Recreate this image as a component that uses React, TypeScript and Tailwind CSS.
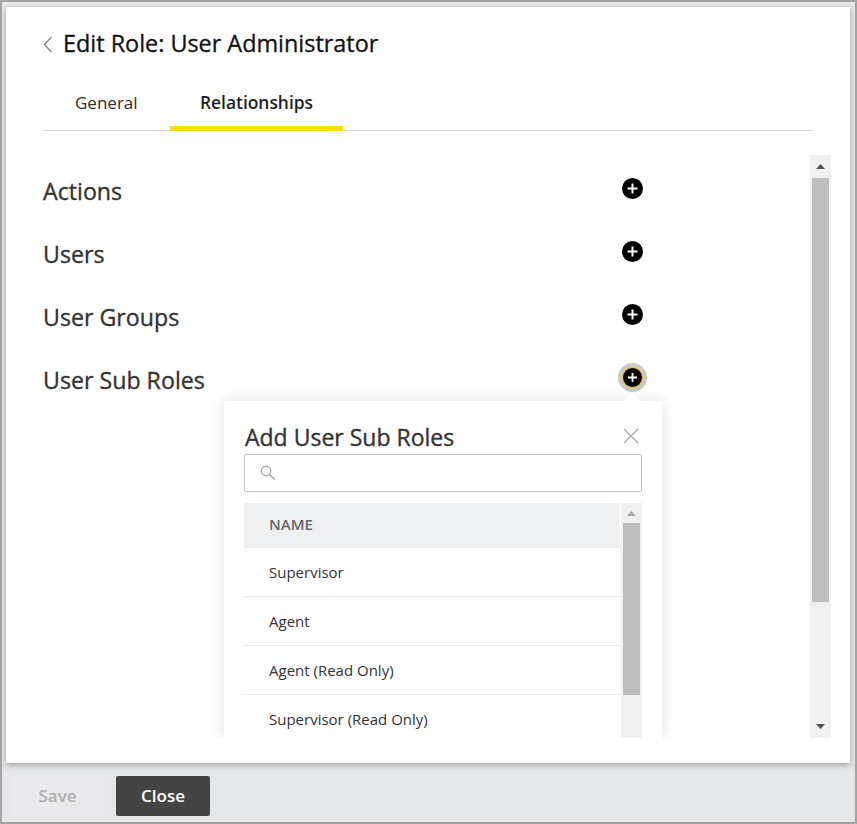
const sections = ['Actions', 'Users', 'User Groups', 'User Sub Roles'];
const subRoles = ['Supervisor', 'Agent', 'Agent (Read Only)', 'Supervisor (Read Only)'];

const PlusIcon = ({ size = 21 }: { size?: number }) => (
  <svg width={size} height={size} viewBox="0 0 21 21" className="block">
    <circle cx="10.5" cy="10.5" r="10.5" fill="#000" />
    <path d="M10.5 5.5v10M5.5 10.5h10" stroke="#fff" strokeWidth="2" />
  </svg>
);

const Arrow = ({ down, color }: { down?: boolean; color: string }) => (
  <svg width="9" height="5" viewBox="0 0 9 5" className="block">
    <path d={down ? 'M0 0h9L4.5 5z' : 'M4.5 0L9 5H0z'} fill={color} />
  </svg>
);

const App = () => {
  return (
    <div className="h-[824px] w-[857px] overflow-hidden border-2 border-[#a3a3a3] bg-[#e6e7e9] font-['Open_Sans',sans-serif]">
      <div className="ml-[4px] mt-[5px] flex h-[756px] w-[844px] flex-col bg-white shadow-[0_2px_6px_rgba(0,0,0,0.3)]">
        <header className="flex h-[74px] items-center pl-[37px]">
          <svg width="10" height="17" viewBox="0 0 10 17" className="mr-[10px] flex-none">
            <path d="M8.5 1L1.5 8.5L8.5 16" fill="none" stroke="#8a8a8a" strokeWidth="1.4" />
          </svg>
          <h1 className="text-[23.4px] leading-none text-[#111] [-webkit-text-stroke:0.3px]">Edit Role: User Administrator</h1>
        </header>

        <nav className="mx-[37px] flex h-[50px] border-b border-[#d8d8d8] pl-[32px]">
          <div className="flex h-[43px] w-[95px] items-center text-[17px] text-[#2d2d2d]">General</div>
          <div className="flex h-[50px] w-[173px] flex-none items-start justify-center border-b-[5px] border-[#ffdf00] pt-[9px] text-[17.4px] leading-[25px] font-semibold text-[#1f1f1f]">
            Relationships
          </div>
        </nav>

        <div className="relative mt-[24px] flex h-[583px] pl-[37px] pr-[19px]">
          <div className="w-[600px] flex-none pt-[5px]">
            {sections.map((name) => (
              <div key={name} className="flex h-[63px] items-center justify-between">
                <span className="text-[23.2px] text-[#333] [-webkit-text-stroke:0.35px]">{name}</span>
                {name === 'User Sub Roles' ? (
                  <span className="mt-[-6px] flex h-[29px] w-[29px] translate-x-[4px] items-center justify-center rounded-full bg-[#c9c9c9]">
                    <span className="rounded-full ring-1 ring-[#f2c21a]">
                      <PlusIcon size={19} />
                    </span>
                  </span>
                ) : (
                  <span className="mt-[-6px]">
                    <PlusIcon />
                  </span>
                )}
              </div>
            ))}
          </div>

          <div className="ml-auto flex w-[21px] flex-none flex-col bg-[#f0f0f0] px-[2px]">
            <div className="flex h-[23px] items-center justify-center">
              <Arrow color="#505050" />
            </div>
            <div className="h-[424px] bg-[#bebebe]" />
            <div className="mt-auto flex h-[23px] items-center justify-center">
              <Arrow down color="#505050" />
            </div>
          </div>

          {/* add sub roles popover */}
          <div className="absolute left-[218px] top-[246px] h-[337px] w-[438px] bg-white px-[20px] shadow-[0_0_14px_rgba(0,0,0,0.12)] [clip-path:inset(-20px_-20px_0_-20px)]">
            <div className="absolute left-[402px] top-[-6px] h-[12px] w-[12px] rotate-45 bg-white" />
            <div className="relative flex h-[53px] items-start justify-between pt-[20px] pl-[1px]">
              <h2 className="text-[23px] leading-[32px] text-[#333] [-webkit-text-stroke:0.35px]">Add User Sub Roles</h2>
              <svg width="16" height="16" viewBox="0 0 16 16" className="mr-[3px] mt-[7px]">
                <path d="M1 1l14 14M15 1L1 15" stroke="#a9a9a9" strokeWidth="1.4" />
              </svg>
            </div>
            <div className="flex h-[38px] items-center rounded-[2px] border border-[#c6c6c6] pl-[15px]">
              <svg width="16" height="16" viewBox="0 0 16 16" className="flex-none">
                <circle cx="6" cy="6" r="4.7" fill="none" stroke="#aaa" strokeWidth="1.4" />
                <path d="M9.5 9.5L15 15" stroke="#aaa" strokeWidth="1.6" />
              </svg>
            </div>
            <div className="mt-[11px] flex h-[235px] overflow-hidden">
              <div className="w-[376px] flex-none">
                <div className="flex h-[45px] items-center bg-[#eff0f2] pb-[2px] pl-[25px] text-[15px] font-semibold text-[#666]">NAME</div>
                {subRoles.map((role) => (
                  <div key={role} className="flex h-[49px] items-center border-b border-[#e8e8e8] pl-[25px] text-[15px] text-[#333]">
                    {role}
                  </div>
                ))}
              </div>
              <div className="ml-auto w-[21px] flex-none bg-[#f0f0f0] px-[2px]">
                <div className="flex h-[20px] items-center justify-center">
                  <Arrow color="#a8a8a8" />
                </div>
                <div className="h-[172px] bg-[#bebebe]" />
              </div>
            </div>
          </div>
        </div>
      </div>

      <footer className="ml-[9px] mt-[13px] flex gap-[12px]">
        <button className="h-[40px] w-[93px] rounded-[2px] bg-[#e9e9eb] text-[17px] font-semibold text-[#b0b0b0]">Save</button>
        <button className="h-[40px] w-[94px] rounded-[2px] bg-[#444] text-[17px] font-semibold text-white">Close</button>
      </footer>
    </div>
  );
};

export default App;
